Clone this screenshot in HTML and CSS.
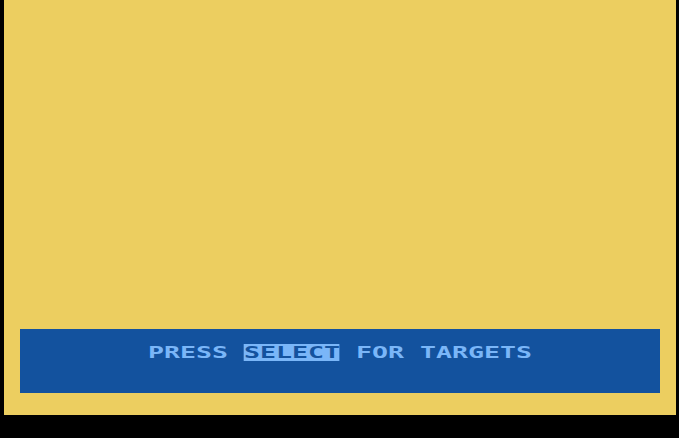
FILE: index.html
```html
<!DOCTYPE html>
<html>
<head>
<meta charset="utf-8">
<link rel="stylesheet" href="styles.css">
</head>
<body>
<div class="screen">
  <div class="playfield"></div>
  <div class="status">
    <div class="msg">PRESS <span class="hl">SELECT</span> FOR TARGETS</div>
  </div>
</div>
</body>
</html>
```
FILE: styles.css
```css
html, body {
  margin: 0;
  padding: 0;
  background: #000;
  width: 679px;
  height: 438px;
  overflow: hidden;
}

.screen {
  margin-left: 4px;
  width: 672px;
  height: 415px;
  background: #ecce60;
  display: flex;
  flex-direction: column;
  box-sizing: border-box;
  padding: 0 16px 22px;
}

.playfield {
  flex: 1;
}

.status {
  height: 64px;
  background: #13529e;
  box-sizing: border-box;
  padding: 15px 0 0 128px;
}

/* 24 cells of 16px each, stretched from a monospace face */
.msg {
  display: inline-block;
  font-family: "DejaVu Sans Mono", monospace;
  font-weight: bold;
  font-size: 15px;
  line-height: 18px;
  height: 17px;
  white-space: pre;
  color: #7ab6f8;
  transform: scaleX(1.772);
  transform-origin: left top;
}

.hl {
  display: inline-block;
  background: #7ab6f8;
  color: #13529e;
  height: 17px;
  line-height: 18px;
  vertical-align: top;
}
```
